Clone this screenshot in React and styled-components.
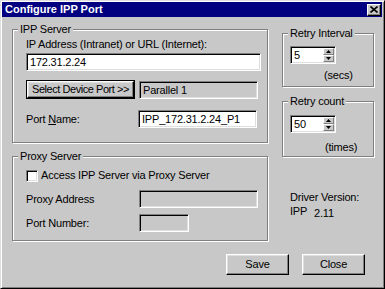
import React from 'react'
import styled, { createGlobalStyle } from 'styled-components'

const GlobalStyle = createGlobalStyle`
  body {
    margin: 0;
    font-family: "Liberation Sans", Arial, sans-serif;
    font-size: 11px;
    letter-spacing: -0.2px;
    color: #000;
  }
`;

const Window = styled.div`
  width: 385px;
  height: 289px;
  box-sizing: border-box;
  background: #c8c8c8;
  border: 1px solid;
  border-color: #dfdfdf #000 #000 #dfdfdf;
  box-shadow: inset 1px 1px 0 #fff, inset -1px -1px 0 #808080;
  padding: 1px 2px 2px 1px;
  display: flex;
  flex-direction: column;
`;

const TitleBar = styled.div`
  height: 15px;
  background: #000080;
  display: flex;
  align-items: center;
  justify-content: space-between;
  padding: 0 1px 0 3px;
`;

const Title = styled.span`
  color: #fff;
  font-weight: bold;
  font-size: 11px;
  letter-spacing: 0;
  line-height: 15px;
`;

const CloseBox = styled.div`
  width: 14px;
  height: 12px;
  box-sizing: border-box;
  background: #c8c8c8;
  border: 1px solid;
  border-color: #fff #000 #000 #fff;
  box-shadow: inset -1px -1px 0 #808080;
  display: flex;
  align-items: center;
  justify-content: center;
`;

const Body = styled.div`
  display: grid;
  grid-template-columns: 257px 92px;
  column-gap: 13px;
  padding: 6px 0 0 10px;
`;

const Column = styled.div`
  display: flex;
  flex-direction: column;
  padding-top: ${p => p.$top || 0}px;
`;

const Group = styled.fieldset`
  margin: ${p => p.$mt || 0}px 0 0 0;
  padding: 0;
  width: ${p => p.$w}px;
  box-sizing: border-box;
  border: 1px solid #808080;
  box-shadow: 1px 1px 0 #fff, inset 1px 1px 0 #fff;
  min-width: 0;
`;

const Legend = styled.legend`
  margin-left: 5px;
  padding: 0 2px;
  line-height: 13px;
  background: #c8c8c8;
`;

const GroupContent = styled.div`
  display: flex;
  flex-direction: column;
  padding: ${p => p.$pad};
`;

const Label = styled.div`
  line-height: 13px;
  height: 13px;
  width: ${p => (p.$w ? `${p.$w}px` : 'auto')};
  margin-top: ${p => p.$mt || 0}px;
  margin-left: ${p => p.$ml || 0}px;
  flex-shrink: 0;
`;

const Row = styled.div`
  display: flex;
  align-items: center;
  gap: ${p => p.$gap || 0}px;
  margin-top: ${p => p.$mt || 0}px;
`;

const Field = styled.div`
  width: ${p => p.$w}px;
  height: 18px;
  box-sizing: border-box;
  flex-shrink: 0;
  background: ${p => (p.$disabled ? '#c8c8c8' : '#fff')};
  border: 1px solid;
  border-color: #808080 #fff #fff #808080;
  box-shadow: inset 1px 1px 0 #000, inset -1px -1px 0 #dfdfdf;
  padding: 0 3px;
  line-height: 16px;
  white-space: nowrap;
  overflow: hidden;
`;

const DefaultButton = styled.div`
  border: 1px solid #000;
  flex-shrink: 0;
`;

const Button = styled.div`
  width: ${p => p.$w}px;
  height: ${p => p.$h}px;
  box-sizing: border-box;
  background: #c8c8c8;
  border: 1px solid;
  border-color: #fff #000 #000 #fff;
  box-shadow: inset -1px -1px 0 #808080, inset 1px 1px 0 #dfdfdf;
  display: flex;
  align-items: center;
  justify-content: center;
  white-space: nowrap;
  line-height: 13px;
  letter-spacing: ${p => p.$ls || '-0.2px'};
`;

const Check = styled.div`
  width: 12px;
  height: 12px;
  box-sizing: border-box;
  background: #fff;
  border: 1px solid;
  border-color: #808080 #fff #fff #808080;
  box-shadow: inset 1px 1px 0 #000, inset -1px -1px 0 #dfdfdf;
  flex-shrink: 0;
`;

const Spin = styled(Field)`
  display: flex;
  padding: 0 0 0 3px;
  justify-content: space-between;
`;

const SpinButtons = styled.div`
  display: flex;
  flex-direction: column;
  margin: 1px 1px 1px 0;
`;

const SpinBtn = styled.div`
  width: 11px;
  height: 7px;
  box-sizing: border-box;
  background: #c8c8c8;
  border: 1px solid;
  border-color: #fff #808080 #808080 #fff;
  display: flex;
  align-items: center;
  justify-content: center;
`;

const Info = styled.div`
  margin-top: ${p => p.$mt || 0}px;
  padding-left: 8px;
  line-height: 16px;
  display: flex;
`;

const Footer = styled.div`
  display: flex;
  justify-content: flex-end;
  gap: 13px;
  padding: 13px 17px 0 0;
`;

const Arrow = ({ up }) => (
  <svg width="5" height="3" viewBox="0 0 5 3">
    <path d={up ? 'M2.5 0 L5 3 L0 3 Z' : 'M0 0 L5 0 L2.5 3 Z'} fill="#000" />
  </svg>
);

const SpinBox = ({ value }) => (
  <Spin $w={46}>
    <span>{value}</span>
    <SpinButtons>
      <SpinBtn><Arrow up /></SpinBtn>
      <SpinBtn><Arrow /></SpinBtn>
    </SpinButtons>
  </Spin>
);

const App = () => {
  return (
    <>
      <GlobalStyle />
      <Window>
        <TitleBar>
          <Title>Configure IPP Port</Title>
          <CloseBox>
            <svg width="8" height="7" viewBox="0 0 8 7">
              <path d="M0.5 0.5 L7.5 6.5 M7.5 0.5 L0.5 6.5" stroke="#000" strokeWidth="1.6" />
            </svg>
          </CloseBox>
        </TitleBar>

        <Body>
          <Column>
            <Group $w={256}>
              <Legend>IPP Server</Legend>
              <GroupContent $pad="2px 6px 14px 13px">
                <Label>IP Address (Intranet) or URL (Internet):</Label>
                <Row $mt={2}>
                  <Field $w={235}>172.31.2.24</Field>
                </Row>
                <Row $mt={9} $gap={4}>
                  <DefaultButton>
                    <Button $w={107} $h={17} $ls="-0.45px">Select Device Port &gt;&gt;</Button>
                  </DefaultButton>
                  <Field $w={119} $disabled>Parallel 1</Field>
                </Row>
                <Row $mt={11}>
                  <Label $w={112}>Port <u>N</u>ame:</Label>
                  <Field $w={119}>IPP_172.31.2.24_P1</Field>
                </Row>
              </GroupContent>
            </Group>

            <Group $w={256} $mt={7}>
              <Legend>Proxy Server</Legend>
              <GroupContent $pad="6px 6px 8px 13px">
                <Row $gap={3}>
                  <Check />
                  <Label>Access IPP Server via Proxy Server</Label>
                </Row>
                <Row $mt={8}>
                  <Label $w={113}>Proxy Address</Label>
                  <Field $w={119} $disabled />
                </Row>
                <Row $mt={6}>
                  <Label $w={113}>Port Number:</Label>
                  <Field $w={50} $disabled />
                </Row>
              </GroupContent>
            </Group>
          </Column>

          <Column $top={4}>
            <Group $w={92}>
              <Legend>Retry Interval</Legend>
              <GroupContent $pad="6px 0 4px 7px">
                <SpinBox value="5" />
                <Label $mt={5} $ml={34}>(secs)</Label>
              </GroupContent>
            </Group>

            <Group $w={92} $mt={8}>
              <Legend>Retry count</Legend>
              <GroupContent $pad="7px 0 2px 7px">
                <SpinBox value="50" />
                <Label $mt={8} $ml={35}>(times)</Label>
              </GroupContent>
            </Group>

            <Info $mt={32}>Driver Version:</Info>
            <Info>
              <Label $w={24}>IPP</Label>
              <span>2.11</span>
            </Info>
          </Column>
        </Body>

        <Footer>
          <Button $w={63} $h={21}>Save</Button>
          <Button $w={63} $h={21}>Close</Button>
        </Footer>
      </Window>
    </>
  )
}

export default App
